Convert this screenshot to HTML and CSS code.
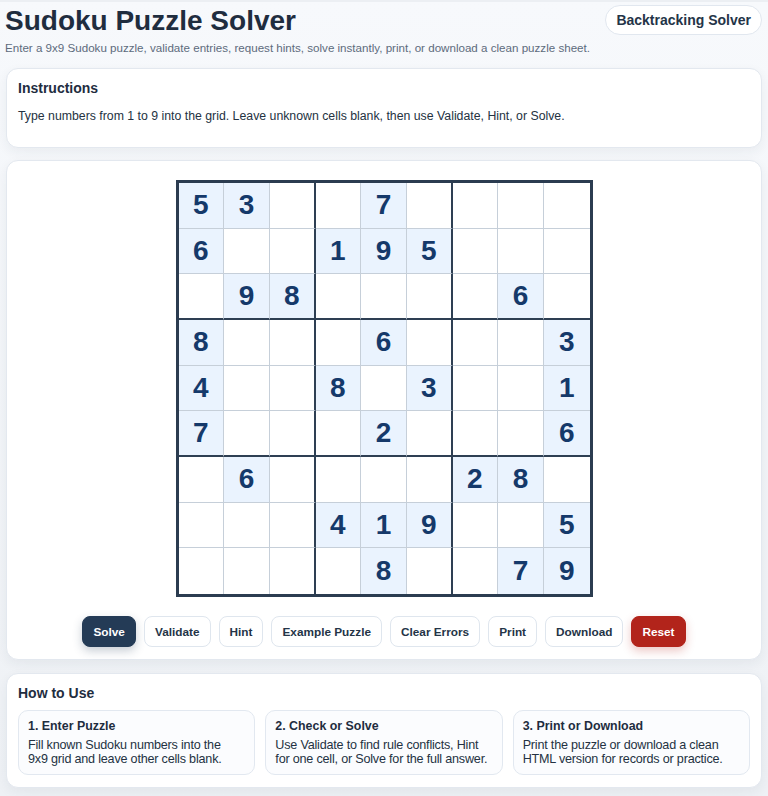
FILE: index.html
```html
<!DOCTYPE html>
<html lang="en">
<head>
<meta charset="utf-8">
<title>Sudoku Puzzle Solver</title>
<link rel="stylesheet" href="styles.css">
</head>
<body>
<div class="page">
  <header class="header">
    <div class="header-text">
      <h1 class="title">Sudoku Puzzle Solver</h1>
      <p class="subtitle">Enter a 9x9 Sudoku puzzle, validate entries, request hints, solve instantly, print, or download a clean puzzle sheet.</p>
    </div>
    <span class="badge">Backtracking Solver</span>
  </header>

  <section class="card instructions">
    <h2 class="card-title">Instructions</h2>
    <p class="card-text">Type numbers from 1 to 9 into the grid. Leave unknown cells blank, then use Validate, Hint, or Solve.</p>
  </section>

  <section class="card board-card">
    <div class="grid">
      <div class="cell g">5</div><div class="cell g">3</div><div class="cell c3"></div><div class="cell"></div><div class="cell g">7</div><div class="cell c3"></div><div class="cell"></div><div class="cell"></div><div class="cell c9"></div>
      <div class="cell g">6</div><div class="cell"></div><div class="cell c3"></div><div class="cell g">1</div><div class="cell g">9</div><div class="cell g c3">5</div><div class="cell"></div><div class="cell"></div><div class="cell c9"></div>
      <div class="cell r3"></div><div class="cell g r3">9</div><div class="cell g c3 r3">8</div><div class="cell r3"></div><div class="cell r3"></div><div class="cell c3 r3"></div><div class="cell r3"></div><div class="cell g r3">6</div><div class="cell c9 r3"></div>
      <div class="cell g">8</div><div class="cell"></div><div class="cell c3"></div><div class="cell"></div><div class="cell g">6</div><div class="cell c3"></div><div class="cell"></div><div class="cell"></div><div class="cell g c9">3</div>
      <div class="cell g">4</div><div class="cell"></div><div class="cell c3"></div><div class="cell g">8</div><div class="cell"></div><div class="cell g c3">3</div><div class="cell"></div><div class="cell"></div><div class="cell g c9">1</div>
      <div class="cell g r3">7</div><div class="cell r3"></div><div class="cell c3 r3"></div><div class="cell r3"></div><div class="cell g r3">2</div><div class="cell c3 r3"></div><div class="cell r3"></div><div class="cell r3"></div><div class="cell g c9 r3">6</div>
      <div class="cell"></div><div class="cell g">6</div><div class="cell c3"></div><div class="cell"></div><div class="cell"></div><div class="cell c3"></div><div class="cell g">2</div><div class="cell g">8</div><div class="cell c9"></div>
      <div class="cell"></div><div class="cell"></div><div class="cell c3"></div><div class="cell g">4</div><div class="cell g">1</div><div class="cell g c3">9</div><div class="cell"></div><div class="cell"></div><div class="cell g c9">5</div>
      <div class="cell r9"></div><div class="cell r9"></div><div class="cell c3 r9"></div><div class="cell r9"></div><div class="cell g r9">8</div><div class="cell c3 r9"></div><div class="cell r9"></div><div class="cell g r9">7</div><div class="cell g c9 r9">9</div>
    </div>
    <div class="actions">
      <button class="btn btn-primary">Solve</button>
      <button class="btn">Validate</button>
      <button class="btn">Hint</button>
      <button class="btn">Example Puzzle</button>
      <button class="btn">Clear Errors</button>
      <button class="btn">Print</button>
      <button class="btn">Download</button>
      <button class="btn btn-danger">Reset</button>
    </div>
  </section>

  <section class="card howto">
    <h2 class="card-title">How to Use</h2>
    <div class="steps">
      <div class="step">
        <h3 class="step-title">1. Enter Puzzle</h3>
        <p class="step-text">Fill known Sudoku numbers into the<br>9x9 grid and leave other cells blank.</p>
      </div>
      <div class="step">
        <h3 class="step-title">2. Check or Solve</h3>
        <p class="step-text">Use Validate to find rule conflicts, Hint<br>for one cell, or Solve for the full answer.</p>
      </div>
      <div class="step">
        <h3 class="step-title">3. Print or Download</h3>
        <p class="step-text">Print the puzzle or download a clean<br>HTML version for records or practice.</p>
      </div>
    </div>
  </section>
</div>
</body>
</html>
```
FILE: styles.css
```css
* { box-sizing: border-box; }

html, body {
  margin: 0;
  padding: 0;
}

body {
  font-family: "Liberation Sans", Arial, sans-serif;
  color: #1f2d3d;
  background: linear-gradient(180deg, #f7f9fc 0%, #eef1f5 100%);
  border-top: 2px solid #eceff3;
  min-height: 796px;
}

.page {
  padding: 3px 6px 8px 6px;
}

.header {
  display: flex;
  justify-content: space-between;
  align-items: flex-start;
}

.title {
  margin: 0 0 0 -1px;
  font-size: 28px;
  line-height: 32px;
  font-weight: 700;
  color: #1f2d3f;
}

.subtitle {
  margin: 3px 0 0 -1px;
  font-size: 11.6px;
  line-height: 16px;
  color: #5d6b7c;
}

.badge {
  display: inline-block;
  height: 30px;
  line-height: 28px;
  padding: 0 10px;
  border: 1px solid #e1e7ef;
  border-radius: 16px;
  background: #ffffff;
  font-size: 14px;
  font-weight: 700;
  color: #243447;
}

.card {
  background: #ffffff;
  border: 1px solid #e3e8ef;
  border-radius: 12px;
  box-shadow: 0 4px 12px rgba(30, 45, 70, 0.06);
}

.instructions {
  margin-top: 12px;
  height: 80px;
  padding: 11px 11px;
}

.card-title {
  margin: 0;
  font-size: 14px;
  line-height: 16px;
  font-weight: 700;
  color: #1f2d3f;
}

.card-text {
  margin: 12px 0 0 0;
  font-size: 12.3px;
  line-height: 16px;
  color: #243242;
}

.board-card {
  margin-top: 12px;
  padding: 19px 11px 12px 11px;
}

.grid {
  width: 417px;
  height: 417px;
  margin: 0 auto;
  border: 3px solid #2b3c50;
  display: grid;
  grid-template-columns: repeat(9, 1fr);
  grid-template-rows: repeat(9, 1fr);
  background: #ffffff;
}

.cell {
  border-right: 1px solid #c6cfd9;
  border-bottom: 1px solid #c6cfd9;
  display: flex;
  align-items: center;
  justify-content: center;
  font-size: 28px;
  font-weight: 700;
  color: #15396a;
  background: #ffffff;
}

.cell.g { background: #eaf3fe; }
.cell.c3 { border-right: 2px solid #2e3f53; }
.cell.r3 { border-bottom: 2px solid #2e3f53; }
.cell.c9 { border-right: none; }
.cell.r9 { border-bottom: none; }

.actions {
  margin-top: 19px;
  display: flex;
  justify-content: center;
  gap: 8px;
}

.btn {
  height: 31px;
  padding: 0 10px;
  border: 1px solid #dfe6ee;
  border-radius: 8px;
  background: #ffffff;
  font-family: "Liberation Sans", Arial, sans-serif;
  font-size: 11.8px;
  font-weight: 700;
  color: #243447;
}

.btn-primary {
  background: #243b56;
  border-color: #243b56;
  color: #ffffff;
  box-shadow: 0 4px 10px rgba(36, 59, 86, 0.25);
}

.btn-danger {
  background: #b2241b;
  border-color: #b2241b;
  color: #ffffff;
  box-shadow: 0 4px 10px rgba(178, 36, 27, 0.25);
}

.howto {
  margin-top: 13px;
  padding: 11px 11px 12px 11px;
}

.steps {
  margin-top: 9px;
  display: grid;
  grid-template-columns: repeat(3, 1fr);
  gap: 10px;
}

.step {
  border: 1px solid #e2e8f0;
  border-radius: 10px;
  background: #fbfcfe;
  padding: 8px 4px 8px 9px;
}

.step-title {
  margin: 0;
  font-size: 12.4px;
  line-height: 15px;
  font-weight: 700;
  color: #1f2d3f;
}

.step-text {
  margin: 4px 0 0 0;
  font-size: 12.6px;
  line-height: 14px;
  letter-spacing: -0.2px;
  white-space: nowrap;
  color: #243242;
}
```
